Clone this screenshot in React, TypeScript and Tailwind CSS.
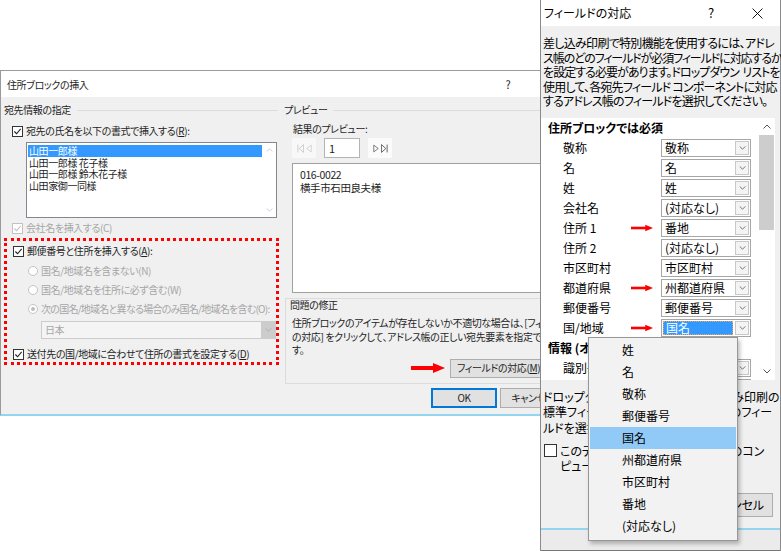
import React from 'react';

function Chevron({ up = false, className = '' }: { up?: boolean; className?: string }) {
  return (
    <svg viewBox="0 0 8 5" className={className} fill="none" stroke="currentColor" strokeWidth="1">
      <polyline points={up ? '0.5,4.5 4,1 7.5,4.5' : '0.5,0.5 4,4 7.5,0.5'} />
    </svg>
  );
}

function Check({ checked = false, disabled = false, big = false }: { checked?: boolean; disabled?: boolean; big?: boolean }) {
  return (
    <span
      className={
        'flex shrink-0 items-center justify-center border bg-white ' +
        (big ? 'w-[13px] h-[13px] ' : 'w-[11px] h-[11px] ') +
        (disabled ? 'border-[#c2c2c2] text-[#c2c2c2]' : 'border-[#333333] text-[#222222]')
      }
    >
      {checked && (
        <svg viewBox="0 0 10 10" className="w-[9px] h-[9px]" fill="none" stroke="currentColor" strokeWidth="1.2">
          <polyline points="1.5,5 4,7.5 8.5,2" />
        </svg>
      )}
    </span>
  );
}

function Radio({ selected = false }: { selected?: boolean }) {
  return (
    <span className="flex w-[10px] h-[10px] shrink-0 items-center justify-center rounded-full border border-[#c4c4c4] bg-white">
      {selected && <span className="w-[4px] h-[4px] rounded-full bg-[#bdbdbd]" />}
    </span>
  );
}

function RedArrow({ big = false }: { big?: boolean }) {
  return (
    <svg viewBox="0 0 34 10" className={big ? 'w-[34px] h-[10px]' : 'w-[22px] h-[8px]'}>
      <rect x="0" y="3" width="23" height="4" fill="#ff0000" />
      <polygon points="22,0 34,5 22,10" fill="#ff0000" />
    </svg>
  );
}

function Combo({ value, selected = false }: { value: string; selected?: boolean }) {
  return (
    <div className="flex w-[90px] h-[18px] shrink-0 border border-[#a6a6a6] bg-white">
      <div className="flex flex-1 items-center p-[1px]">
        <span
          className={
            'flex h-full w-full items-center pl-[2px] leading-none ' +
            (selected ? 'bg-[#3399ff] text-white border border-dotted border-[#f3a44d]' : '')
          }
        >
          {value}
        </span>
      </div>
      <div className="m-[1px] flex w-[14px] items-center justify-center border border-[#c8c8c8] bg-[#f4f4f4] text-[#555555]">
        <Chevron className="w-[7px] h-[4px]" />
      </div>
    </div>
  );
}

const required: { label: string; value: string; arrow?: boolean; selected?: boolean }[] = [
  { label: '敬称', value: '敬称' },
  { label: '名', value: '名' },
  { label: '姓', value: '姓' },
  { label: '会社名', value: '(対応なし)' },
  { label: '住所 1', value: '番地', arrow: true },
  { label: '住所 2', value: '(対応なし)' },
  { label: '市区町村', value: '市区町村' },
  { label: '都道府県', value: '州都道府県', arrow: true },
  { label: '郵便番号', value: '郵便番号' },
  { label: '国/地域', value: '国名', arrow: true, selected: true },
];

const optional = [
  { label: '識別子', value: '(対応なし)' },
  { label: '役職', value: '(対応なし)' },
];

const menu = ['姓', '名', '敬称', '郵便番号', '国名', '州都道府県', '市区町村', '番地', '(対応なし)'];

function AddressBlockDialog() {
  return (
    <div className="absolute left-0 top-[70px] flex w-[580px] h-[346px] flex-col border-l border-t border-[#9b9b9b] border-b-2 border-b-[#93d5ee] bg-[#f0f0f0] text-[10px] tracking-[-0.4px] text-[#1e1e1e]">
      <div className="flex h-[26px] shrink-0 items-center bg-white pl-[6px] pr-[67px]">
        <span className="flex-1">住所ブロックの挿入</span>
        <span className="w-[10px] text-center text-[11px]">?</span>
      </div>

      <div className="flex flex-1">
        {/* left column */}
        <div className="flex w-[283px] shrink-0 flex-col pl-[3px] leading-[14px]">
          <div className="mt-[6px] flex h-[14px] items-center gap-[6px] pr-[6px]">
            <span>宛先情報の指定</span>
            <div className="h-px flex-1 bg-[#dcdcdc]" />
          </div>
          <div className="mt-[7px] flex h-[14px] items-center gap-[3px] pl-[8px]">
            <Check checked />
            <span>
              宛先の氏名を以下の書式で挿入する(<u>R</u>):
            </span>
          </div>
          <div className="ml-[22px] mt-[4px] flex h-[76px] w-[251px] border border-[#828790] bg-white">
            <div className="flex flex-1 flex-col pl-[1px] pt-[2px] leading-[11.5px]">
              <span className="bg-[#3399ff] px-[1px] text-white">山田一郎様</span>
              <span className="px-[1px]">山田一郎様 花子様</span>
              <span className="px-[1px]">山田一郎様 鈴木花子様</span>
              <span className="px-[1px]">山田家御一同様</span>
            </div>
            <div className="flex w-[14px] flex-col items-center justify-between py-[5px] text-[#c2c2c2]">
              <Chevron up className="w-[7px] h-[4px]" />
              <Chevron className="w-[7px] h-[4px]" />
            </div>
          </div>
          <div className="mt-[3px] flex h-[14px] items-center gap-[3px] pl-[8px] text-[#a6a6a6]">
            <Check checked disabled />
            <span>会社名を挿入する(C)</span>
          </div>

          <div className="mt-[3px] flex h-[127px] w-[275px] flex-col border-[3px] border-dotted border-[#ff0000]">
            <div className="mt-[3px] flex h-[14px] items-center gap-[3px] pl-[6px]">
              <Check checked />
              <span>
                郵便番号と住所を挿入する(<u>A</u>):
              </span>
            </div>
            <div className="mt-[6px] flex h-[14px] items-center gap-[3px] pl-[21px] text-[#a6a6a6]">
              <Radio />
              <span>国名/地域名を含まない(N)</span>
            </div>
            <div className="mt-[5px] flex h-[14px] items-center gap-[3px] pl-[21px] text-[#a6a6a6]">
              <Radio />
              <span>国名/地域名を住所に必ず含む(W)</span>
            </div>
            <div className="mt-[5px] flex h-[14px] items-center gap-[3px] pl-[21px] text-[#a6a6a6]">
              <Radio selected />
              <span className="whitespace-nowrap tracking-[-0.75px]">次の国名/地域名と異なる場合のみ国名/地域名を含む(O):</span>
            </div>
            <div className="ml-[34px] mt-[5px] flex h-[18px] w-[235px] border border-[#cccccc] bg-[#f4f4f4] text-[#a6a6a6]">
              <span className="flex flex-1 items-center pl-[3px]">日本</span>
              <span className="flex w-[14px] items-center justify-center bg-[#cccccc] text-[#a8a8a8]">
                <Chevron className="w-[7px] h-[4px]" />
              </span>
            </div>
            <div className="mt-[8px] flex h-[14px] items-center gap-[3px] pl-[6px]">
              <Check checked />
              <span className="whitespace-nowrap">
                送付先の国/地域に合わせて住所の書式を設定する(<u>D</u>)
              </span>
            </div>
          </div>
        </div>

        {/* right column */}
        <div className="flex flex-1 flex-col leading-[14px]">
          <div className="mt-[6px] flex h-[14px] items-center gap-[6px]">
            <span>プレビュー</span>
            <div className="h-px flex-1 bg-[#dcdcdc]" />
          </div>
          <div className="mt-[5px] h-[14px] pl-[9px]">結果のプレビュー:</div>
          <div className="mt-[2px] flex h-[20px] gap-[8px] pl-[8px]">
            <div className="flex w-[24px] items-center justify-center gap-[2px] bg-[#f8f8f8] text-[#c8c8c8]">
              <svg viewBox="0 0 8 10" className="w-[7px] h-[9px]" fill="none" stroke="currentColor" strokeWidth="1">
                <line x1="1" y1="0.5" x2="1" y2="9.5" />
                <polygon points="7.5,0.5 2.5,5 7.5,9.5" />
              </svg>
              <svg viewBox="0 0 8 10" className="w-[6px] h-[9px]" fill="none" stroke="currentColor" strokeWidth="1">
                <polygon points="7,0.5 1,5 7,9.5" />
              </svg>
            </div>
            <div className="flex w-[36px] items-center border border-[#b4b4b4] bg-white pl-[4px] text-[11px]">1</div>
            <div className="flex w-[24px] items-center justify-center gap-[2px] bg-[#fbfbfb] text-[#555555]">
              <svg viewBox="0 0 8 10" className="w-[6px] h-[9px]" fill="none" stroke="currentColor" strokeWidth="1">
                <polygon points="1,0.5 7,5 1,9.5" />
              </svg>
              <svg viewBox="0 0 8 10" className="w-[7px] h-[9px]" fill="none" stroke="currentColor" strokeWidth="1">
                <polygon points="0.5,0.5 5.5,5 0.5,9.5" />
                <line x1="7" y1="0.5" x2="7" y2="9.5" />
              </svg>
            </div>
          </div>
          <div className="ml-[8px] mt-[5px] h-[130px] border border-[#a0a0a0] bg-white px-[7px] pt-[5px] text-[10.5px] leading-[12.5px]">
            <div>016-0022</div>
            <div>横手市石田良夫様</div>
          </div>
          <div className="ml-[1px] mt-[5px] flex h-[86px] w-[280px] flex-col border border-[#dcdcdc]">
            <div className="pl-[4px] leading-[12px]">問題の修正</div>
            <div className="mt-[5px] whitespace-nowrap pl-[6px] leading-[13.5px]">
              <div>住所ブロックのアイテムが存在しないか不適切な場合は、[フィールドの</div>
              <div>の対応] をクリックして、アドレス帳の正しい宛先要素を指定できま</div>
              <div>す。</div>
            </div>
            <div className="mt-[2px] flex items-center gap-[5px] pl-[125px]">
              <RedArrow big />
              <div className="flex h-[19px] w-[100px] items-center border border-[#adadad] bg-[#e1e1e1] pl-[6px] whitespace-nowrap">
                フィールドの対応(<u>M</u>)...
              </div>
            </div>
          </div>
          <div className="mt-[4px] flex gap-[3px] pl-[147px]">
            <div className="flex h-[20px] w-[66px] items-center justify-center border border-[#0078d7] bg-[#e1e1e1] shadow-[inset_0_0_0_1px_#0078d7]">
              OK
            </div>
            <div className="flex h-[20px] w-[66px] items-center justify-center border border-[#adadad] bg-[#e1e1e1]">
              キャンセル
            </div>
          </div>
        </div>
      </div>
    </div>
  );
}

function FieldMatchDialog() {
  return (
    <div className="absolute left-[540px] top-0 flex w-[241px] h-[551px] flex-col border-l border-r border-[#8a8a8a] bg-[#f0f0f0] text-[12px] text-black">
      <div className="flex h-[26px] shrink-0 items-center bg-white pl-[3px] pr-[16px]">
        <span className="flex-1">フィールドの対応</span>
        <span className="w-[12px] text-center text-[13px]">?</span>
        <span className="ml-[33px] flex w-[14px] justify-center">
          <svg viewBox="0 0 10 10" className="w-[11px] h-[11px]" stroke="#111" strokeWidth="0.9">
            <line x1="0.5" y1="0.5" x2="9.5" y2="9.5" />
            <line x1="9.5" y1="0.5" x2="0.5" y2="9.5" />
          </svg>
        </span>
      </div>

      <div className="whitespace-nowrap pl-[2px] pt-[10px] leading-[14.5px] tracking-[-0.8px]">
        <div className="tracking-[-0.7px]">差し込み印刷で特別機能を使用するには、アドレ</div>
        <div className="tracking-[-1.1px]">ス帳のどのフィールドが必須フィールドに対応するか</div>
        <div className="tracking-[-0.95px]">を設定する必要があります。ドロップダウン&nbsp;&nbsp;リストを</div>
        <div>使用して、各宛先フィールド コンポーネントに対応</div>
        <div>するアドレス帳のフィールドを選択してください。</div>
      </div>

      <div className="mt-[9px] flex h-[262px] w-[234px] shrink-0 bg-white">
        <div className="flex w-[217px] flex-col overflow-hidden">
          <div className="flex h-[20px] shrink-0 items-center pl-[7px] font-bold">住所ブロックでは必須</div>
          {required.map((r) => (
            <div key={r.label} className="flex h-[20px] shrink-0 items-center">
              <div className="flex w-[120px] items-center justify-between pl-[22px] pr-[8px]">
                <span>{r.label}</span>
                {r.arrow && <RedArrow />}
              </div>
              <Combo value={r.value} selected={r.selected} />
            </div>
          ))}
          <div className="flex h-[20px] shrink-0 items-center pl-[7px] font-bold">情報 (オプション)</div>
          {optional.map((r) => (
            <div key={r.label} className="flex h-[20px] shrink-0 items-center">
              <div className="w-[120px] pl-[22px]">{r.label}</div>
              <Combo value={r.value} />
            </div>
          ))}
        </div>
        <div className="flex w-[17px] flex-col">
          <div className="flex h-[17px] items-center justify-center text-[#555555]">
            <Chevron up className="w-[8px] h-[5px]" />
          </div>
          <div className="mx-[1px] h-[95px] bg-[#cdcdcd]" />
          <div className="flex-1" />
          <div className="flex h-[17px] items-center justify-center text-[#555555]">
            <Chevron className="w-[8px] h-[5px]" />
          </div>
        </div>
      </div>

      <div className="mt-[9px] whitespace-nowrap pl-[2px] leading-[15.5px]">
        <div>ドロップダウン リストを使って、差し込み印刷の</div>
        <div>標準フィールドに一致するアドレス帳のフィー</div>
        <div>ルドを選択してください。</div>
      </div>

      <div className="mt-[8px] flex items-start gap-[3px] pl-[3px] leading-[15px]">
        <span className="mt-[1px]">
          <Check big />
        </span>
        <div className="whitespace-nowrap">
          <div>このデータ ソースの列の対応をこのコン</div>
          <div>ピューターに保存する</div>
        </div>
      </div>

      <div className="mt-[20px] flex justify-end gap-[6px] pr-[7px]">
        <div className="flex h-[24px] w-[72px] items-center justify-center border border-[#adadad] bg-[#e1e1e1]">OK</div>
        <div className="flex h-[24px] w-[72px] items-center justify-center border border-[#adadad] bg-[#e1e1e1]">キャンセル</div>
      </div>

      <div className="mt-auto h-[23px] border-t-2 border-t-[#93d5ee] border-b border-b-[#777777] bg-[#ebebeb]" />
    </div>
  );
}

function DropdownMenu() {
  return (
    <div className="absolute left-[588px] top-[337px] flex w-[150px] h-[204px] flex-col border border-[#979797] bg-[#f2f2f2] pt-[1px] text-[12px] shadow-[2px_3px_4px_rgba(0,0,0,0.25)]">
      {menu.map((m) => (
        <div
          key={m}
          className={'mx-[1px] flex h-[22px] shrink-0 items-center pl-[32px] ' + (m === '国名' ? 'bg-[#91c9f7]' : '')}
        >
          {m}
        </div>
      ))}
    </div>
  );
}

export default function App() {
  return (
    <div className="relative w-[781px] h-[551px] overflow-hidden bg-white font-['Noto_Sans_CJK_JP','Noto_Sans_CJK_SC',sans-serif] [font-feature-settings:'palt']">
      <AddressBlockDialog />
      <FieldMatchDialog />
      <DropdownMenu />
    </div>
  );
}
